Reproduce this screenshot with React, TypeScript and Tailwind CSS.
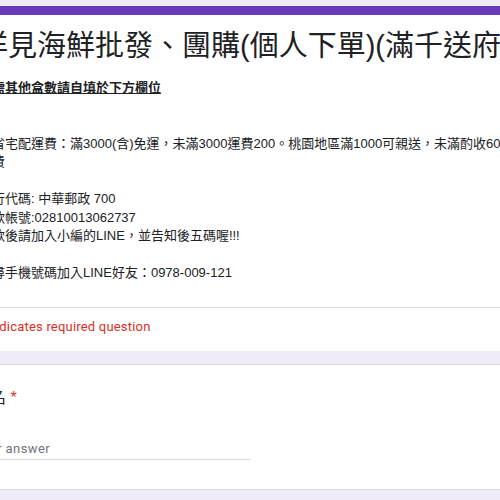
import React from 'react';

const cjk = { fontFamily: 'Arial, "Liberation Sans", "Noto Sans CJK TC", sans-serif' };

export default function App() {
  return (
    <div className="w-[500px] h-[500px] overflow-hidden bg-[#f0ebf8] pt-[6px]" style={cjk}>
      <div className="-ml-[45px] w-[640px] flex flex-col">
        <div className="bg-white rounded-lg border-t-[9px] border-[#673ab7]">
          <div className="px-[24px] pt-[13px] pb-[24px] border-b border-[#dadce0] text-[#202124]">
            <h1 className="text-[29px] leading-[36px] whitespace-nowrap">
              洋見海鮮批發、團購(個人下單)(滿千送府城)
            </h1>
            <div className="mt-[15px] text-[13px] leading-[18.5px] whitespace-nowrap">
              <p className="font-bold underline">如需其他盒數請自填於下方欄位</p>
              <p>&nbsp;</p>
              <p>&nbsp;</p>
              <p>全省宅配運費：滿3000(含)免運，未滿3000運費200。桃園地區滿1000可親送，未滿酌收60</p>
              <p>運費</p>
              <p>&nbsp;</p>
              <p>銀行代碼: 中華郵政 700</p>
              <p>匯款帳號:02810013062737</p>
              <p>匯款後請加入小編的LINE，並告知後五碼喔!!!</p>
              <p>&nbsp;</p>
              <p>搜尋手機號碼加入LINE好友：0978-009-121</p>
            </div>
          </div>
          <div className="px-[24px] pt-[9px] pb-[14px]">
            <p className="text-[13px] leading-[20px] text-[#d93025] tracking-[0.2px]" style={{ fontFamily: 'Roboto, sans-serif' }}>
              * Indicates required question
            </p>
          </div>
        </div>

        <div className="mt-[13px] bg-white rounded-lg border border-[#dadce0] px-[24px] pt-[21px] pb-[29px]">
          <div className="-ml-[6px] text-[16px] leading-[24px] text-[#202124] whitespace-nowrap">
            姓名 <span className="text-[#d93025]">*</span>
          </div>
          <div className="mt-[29px] w-[271px] border-b border-[#e0e0e0]">
            <p className="-ml-[6px] text-[13px] leading-[20px] text-[#70757a] tracking-[0.4px]" style={{ fontFamily: 'Roboto, sans-serif' }}>
              Your answer
            </p>
          </div>
        </div>
      </div>
    </div>
  );
}
